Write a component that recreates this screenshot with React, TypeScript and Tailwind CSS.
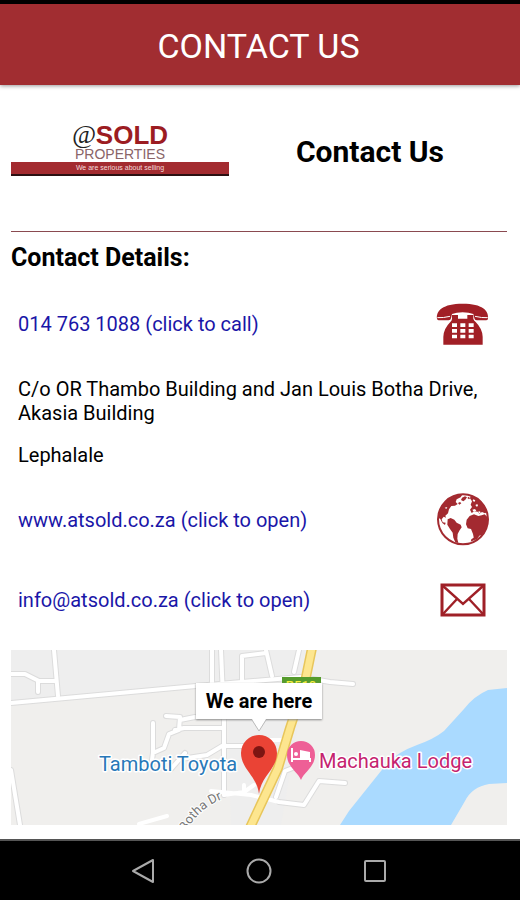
import type { ReactNode } from 'react';

function Logo() {
  return (
    <div className="w-full max-w-[218px] font-['Liberation_Sans',sans-serif]">
      <div className="flex items-center justify-center text-[26px] leading-6 font-bold text-[#9c1c22]">
        <span className="font-['Liberation_Serif',serif] font-normal text-[#222] italic">
          @
        </span>
        <span>SOLD</span>
      </div>
      <p className="text-center text-sm leading-[15px] text-[#8a6468]">
        PROPERTIES
      </p>
      <p className="h-[14px] border-b-2 border-[#2b1012] bg-[#a32b30] text-center text-[7px] leading-3 text-[#f3dcdc]">
        We are serious about selling
      </p>
    </div>
  );
}

function PhoneIcon() {
  return (
    <svg viewBox="0 0 174 144" className="h-12 w-[58px]" fill="#a11f26" aria-hidden="true">
      <path d="M9 56C6 32 26 11 86 11s79 21 76 45q-1 5-6 5h-28q-6 0-7-6l-3-13q-13-5-32-5t-32 5l-3 13q-1 6-7 6H15q-5 0-6-5Z" />
      <path
        d="M10 53q18 1 38-4M161 53q-18 1-38-4"
        fill="none"
        stroke="#fff"
        strokeWidth="3"
      />
      <path d="M54 45h18v11h28V45h18v11q1 5 7 10 20 20 21 44v24H28v-24q1-24 21-44 5-5 5-10Z" />
      <g fill="#fff">
        <path d="M54 70h15v11H54zM79 70h15v11H79zM104 70h15v11h-15z" />
        <path d="M54 87h15v11H54zM79 87h15v11H79zM104 87h15v11h-15z" />
        <path d="M54 104h15v11H54zM79 104h15v11H79zM104 104h15v11h-15z" />
      </g>
    </svg>
  );
}

function GlobeIcon() {
  return (
    <svg viewBox="0 0 174 174" className="size-[58px]" aria-hidden="true">
      <circle cx="87" cy="85" r="75" fill="#fff" stroke="#a32a30" strokeWidth="6" />
      <g fill="#a32a30">
        <path d="M13 80q0-22 15-41 16-19 44-28l14-2-6 10-12 6-3 8 6 6-8 5-11 1-7 10-3 12-8 7 2 6-7-3-6 8 3 9 9 1-2 7-8-6-6-12Z" />
        <path d="M41 85l9-4 11 5 7 9 12 6 3 8-7 10-5 10-1 14 3 13-9-2-6-14-2-15-8-11-8-13Z" />
        <path d="M98 86l9-11 13-5 13 5 10-2 9-3 8 8 1 17-5 20-12 17-8 2-9 13-7-3-3-15-6-15-10-2-5-12Z" />
        <path d="M108 56l6-8-4-7 4-10-6-9 2-8 17 6 15 12 11 15 6 17-6 3-9-4-8 5-5-6-10-1-8 5Z" />
        <path d="M84 20l9-4 6 3-5 7-6 5-7-4ZM72 36l6-3 4 4-6 4ZM100 21l4-4 4 5-3 3Z" />
        <path d="M112 145l14-9 8-2-11 12-13 6Z" />
      </g>
      <g fill="#fff">
        <path d="M115 56l8-2 4 5-8 3ZM132 62l6-1 2 5-5 1ZM124 42l6-3 2 6-4 2ZM32 50l8-2-3 6ZM118 25l6 3-3 5-5-4Z" />
      </g>
    </svg>
  );
}

function MailIcon() {
  return (
    <svg
      viewBox="0 0 46 34"
      className="mr-[6px] h-[34px] w-[46px]"
      fill="none"
      stroke="#9f2027"
      strokeWidth="3"
      aria-hidden="true"
    >
      <path d="M2 2h42v30H2z" />
      <path d="M3 3l20 18L43 3M3 31l14-15M43 31L29 16" strokeWidth="2.4" />
    </svg>
  );
}

type ContactLinkProps = {
  href: string;
  label: string;
  icon: ReactNode;
};

function ContactLink({ href, label, icon }: ContactLinkProps) {
  return (
    <a href={href} className="flex h-20 items-center justify-between text-[#1a16a8]">
      <span>{label}</span>
      {icon}
    </a>
  );
}

function LocationMap() {
  return (
    <section
      aria-label="Map"
      className="relative h-[175px] overflow-hidden bg-[#eeeeee]"
    >
      <svg
        viewBox="0 0 496 175"
        preserveAspectRatio="xMidYMid slice"
        className="block size-full font-[Roboto,sans-serif]"
      >
        <path d="M0 53L185 38l31-4 4 141H0Z" fill="#f0efed" />
        <path d="M300 0h196v175H270Z" fill="#f0efed" />
        <path
          d="M496 38l-19 2q-14 6-24 19l-20 22q-10 8-27 14-22 8-32 21l-20 25-16 20-9 14h111l14-24q7-14 24-17l18-1Z"
          fill="#aadaff"
        />

        <g fill="none" strokeLinejoin="round" strokeLinecap="round">
          <g stroke="#dcdcdc" strokeWidth="6">
            <path d="M0 53L185 36l105-9 29 5 23 2M43 0l4 46M0 24h14l14 7h16M27 32v10" />
            <path d="M201 0v34M210 0l3 70v75M231 30V6l24-3M255 0l6 26M288 0l-5 22M0 120l9 55" />
            <path d="M142 73v30l-2 14M142 103l11-5 5-14 10-4 1-13-14-1M169 70l15-3M164 80l9-2h40M160 119l14-16M170 109l26-4 15-9h40" />
            <path d="M268 152l25 3 15-24 26 2M265 147l9-26 18-7" />
          </g>
          <g stroke="#fff" strokeWidth="4">
            <path d="M0 53L185 36l105-9 29 5 23 2" />
            <path d="M43 0l4 46M0 24h14l14 7h16M27 32v10" />
            <path d="M201 0v34M210 0l3 70v75M231 30V6l24-3M255 0l6 26M288 0l-5 22" />
            <path d="M0 120l9 55M128 174l28-8" />
            <path d="M142 73v30l-2 14M142 103l11-5 5-14 10-4 1-13-14-1M169 70l15-3M164 80l9-2h40M160 119l14-16M170 109l26-4 15-9h40" />
            <path d="M213 145l20-3 10-7M200 141l40 4 28 7 25 3 15-24 26 2M265 147l9-26 18-7M233 143v-8M258 90h20" />
          </g>
          <path d="M301 -2l-7 34-15 46-12 40-31 66" stroke="#e8c65b" strokeWidth="10" />
          <path d="M301 -2l-7 34-15 46-12 40-31 66" stroke="#fde68f" strokeWidth="7" />
        </g>

        <path d="M271 27h39v16h-39z" fill="#559b2d" />
        <text x="290" y="40" textAnchor="middle" fontSize="13" fontWeight="500" fill="#f5ee3e">
          R510
        </text>
        <path id="street" d="M175 182q12-24 39-34" fill="none" />
        <text fontSize="13" fill="#777" stroke="#fff" strokeWidth="2" paintOrder="stroke">
          <textPath href="#street">Botha Dr</textPath>
        </text>

        <g fontSize="20" paintOrder="stroke" stroke="#fff" strokeWidth="3" strokeLinejoin="round">
          <text x="88" y="121" fill="#2878b8">
            Tamboti Toyota
          </text>
          <text x="308" y="118" fill="#c5236f">
            Machauka Lodge
          </text>
        </g>

        <path
          d="M290 130c-3-8-14-13-14-25a14 14 0 0 1 28 0c0 12-11 17-14 25Z"
          fill="#ee5f96"
        />
        <path d="M281 98v14M281 109h18v3" fill="none" stroke="#fff" strokeWidth="2" />
        <circle cx="285" cy="104" r="2" fill="#fff" />
        <path d="M289 100l10 2v6h-10z" fill="#fff" />

        <path
          d="M248 144c-2-18-18-25-18-41a18 18 0 0 1 36 0c0 16-16 23-18 41Z"
          fill="#ea4335"
        />
        <circle cx="248" cy="102" r="6" fill="#7d1512" />
      </svg>

      <div className="absolute inset-x-0 top-[33px] flex flex-col items-center">
        <p className="bg-white px-[10px] text-xl leading-9 font-bold text-black shadow-[0_1px_2px_#888]">
          We are here
        </p>
        <svg viewBox="0 0 18 13" className="h-[13px] w-[18px]" aria-hidden="true">
          <path d="M2 0l7 12 7-12Z" fill="#fff" />
          <path d="M2 1l7 11 7-11" fill="none" stroke="#bbb" />
        </svg>
      </div>
    </section>
  );
}

function NavigationBar() {
  const iconClass = 'size-7 fill-none stroke-[#aaa] stroke-2';

  return (
    <nav className="flex h-[61px] items-center justify-center gap-[88px] border-t-2 border-[#555] bg-black pr-[3px]">
      <button type="button" aria-label="Back">
        <svg viewBox="0 0 28 28" className={iconClass}>
          <path d="M24 3v22L4 14Z" strokeLinejoin="round" />
        </svg>
      </button>
      <button type="button" aria-label="Home">
        <svg viewBox="0 0 28 28" className={iconClass}>
          <circle cx="14" cy="14" r="11.5" />
        </svg>
      </button>
      <button type="button" aria-label="Recent apps">
        <svg viewBox="0 0 28 28" className={iconClass}>
          <rect x="4" y="4" width="20" height="20" rx="1" />
        </svg>
      </button>
    </nav>
  );
}

export default function App() {
  return (
    <div className="flex min-h-screen flex-col bg-white font-[Roboto,sans-serif] text-black">
      <header className="border-t-4 border-black bg-[#a12d31] pt-1 pr-[3px] shadow-[0_1px_4px_#999]">
        <h1 className="text-center text-[34px] leading-[77px] text-white">
          CONTACT US
        </h1>
      </header>

      <main className="flex-1 pr-[13px] pl-[11px]">
        <div className="grid h-[147px] grid-cols-[218fr_278fr] items-start border-b border-[#8a4a50] pt-[38px]">
          <Logo />
          <h2 className="pt-[9px] pl-1 text-center text-[30px] leading-10 font-bold">
            Contact Us
          </h2>
        </div>

        <h3 className="pt-2 text-[25px] leading-9 font-bold">Contact Details:</h3>

        <div className="pt-2 pr-[15px] pl-[7px] text-[20px] leading-6">
          <ContactLink
            href="tel:0147631088"
            label="014 763 1088 (click to call)"
            icon={<PhoneIcon />}
          />
          <address className="space-y-[18px] pt-[13px] pb-[13px] not-italic">
            <p>C/o OR Thambo Building and Jan Louis Botha Drive, Akasia Building</p>
            <p>Lephalale</p>
          </address>
          <ContactLink
            href="http://www.atsold.co.za"
            label="www.atsold.co.za (click to open)"
            icon={<GlobeIcon />}
          />
          <ContactLink
            href="mailto:info@atsold.co.za"
            label="info@atsold.co.za (click to open)"
            icon={<MailIcon />}
          />
        </div>

        <div className="pt-[10px] pb-[14px]">
          <LocationMap />
        </div>
      </main>

      <NavigationBar />
    </div>
  );
}
